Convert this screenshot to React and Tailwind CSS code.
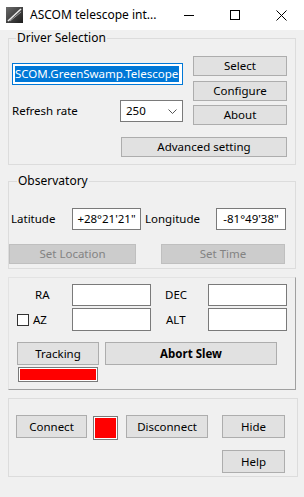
const Btn = ({ className = '', disabled, bold, children }) => (
  <div
    className={`flex items-center justify-center border ${
      disabled ? 'border-[#bfbfbf] bg-[#cccccc] text-[#838383]' : 'border-[#adadad] bg-[#e1e1e1] text-black'
    } ${bold ? 'font-bold' : ''} ${className}`}
  >
    {children}
  </div>
)

const Box = ({ className = '', children }) => (
  <div className={`flex items-center justify-center border border-[#7a7a7a] bg-white ${className}`}>
    {children}
  </div>
)

const App = () => {
  return (
    <div className="w-[304px] h-[497px] overflow-hidden bg-[#f0f0f0] text-[11.5px] leading-[16px] text-black font-['Noto_Sans',sans-serif]">
      {/* Title bar */}
      <div className="h-[30px] bg-white flex items-center text-[12px]">
        <svg className="ml-[6px]" width="17" height="16" viewBox="0 0 17 16">
          <defs>
            <linearGradient id="sky" x1="0" y1="0" x2="1" y2="1">
              <stop offset="0" stopColor="#6b6b6b" />
              <stop offset="1" stopColor="#1c1c1c" />
            </linearGradient>
          </defs>
          <rect width="17" height="16" fill="url(#sky)" />
          <path d="M2 14 L15 2" stroke="#e8e8e8" strokeWidth="1.6" />
          <path d="M4 14 L15 5" stroke="#9a9a9a" strokeWidth="1" />
        </svg>
        <span className="ml-[7px]">ASCOM telescope int...</span>
        <div className="flex-1" />
        <div className="w-[46px] h-full flex items-center justify-center">
          <svg width="10" height="10" viewBox="0 0 10 10">
            <path d="M0 5.5 H10" stroke="#000" strokeWidth="1" />
          </svg>
        </div>
        <div className="w-[46px] h-full flex items-center justify-center">
          <svg width="10" height="10" viewBox="0 0 10 10">
            <rect x="0.5" y="0.5" width="9" height="9" fill="none" stroke="#000" strokeWidth="1" />
          </svg>
        </div>
        <div className="w-[46px] h-full flex items-center justify-center">
          <svg width="11" height="11" viewBox="0 0 11 11">
            <path d="M0.5 0.5 L10.5 10.5 M10.5 0.5 L0.5 10.5" stroke="#000" strokeWidth="1" />
          </svg>
        </div>
      </div>

      <div className="px-[8px]">
        {/* Driver Selection */}
        <fieldset className="border border-[#dcdcdc] pb-[7px]">
          <legend className="ml-[7px] px-[1px] leading-[16px] text-[12px]">Driver Selection</legend>
          <div className="flex items-start">
            <div className="ml-[3px] w-[171px]">
              <div className="mt-[17px] h-[22px] border border-[#0078d7] bg-white flex items-center overflow-hidden pl-[2px]">
                <span className="bg-[#0078d7] text-white whitespace-nowrap pr-[1px]">SCOM.GreenSwamp.Telescope</span>
              </div>
              <div className="mt-[15px] h-[22px] flex items-center">
                <span>Refresh rate</span>
                <div className="ml-auto w-[63px] h-[22px] border border-[#7a7a7a] bg-white flex items-center pl-[5px] pr-[5px]">
                  <span>250</span>
                  <svg className="ml-auto" width="9" height="5" viewBox="0 0 9 5">
                    <path d="M0.5 0.5 L4.5 4.5 L8.5 0.5" fill="none" stroke="#555" strokeWidth="1" />
                  </svg>
                </div>
              </div>
            </div>
            <div className="ml-[10px] w-[94px] flex flex-col">
              <Btn className="mt-[10px] h-[20px]">Select</Btn>
              <Btn className="mt-[5px] h-[20px]">Configure</Btn>
              <Btn className="mt-[4px] h-[20px]">About</Btn>
            </div>
          </div>
          <Btn className="ml-[112px] mt-[12px] w-[166px] h-[20px]">Advanced setting</Btn>
        </fieldset>

        {/* Observatory */}
        <fieldset className="mt-[8px] border border-[#dcdcdc] pb-[4px]">
          <legend className="ml-[8px] px-[1px] leading-[16px] text-[12px]">Observatory</legend>
          <div className="mt-[19px] h-[22px] flex items-center">
            <span className="w-[63px] pl-[2px]">Latitude</span>
            <Box className="w-[69px] h-[22px]">+28°21'21"</Box>
            <span className="w-[75px] pl-[4px]">Longitude</span>
            <Box className="w-[70px] h-[22px]">-81°49'38"</Box>
          </div>
          <div className="mt-[14px] flex">
            <Btn disabled className="w-[127px] h-[20px]">Set Location</Btn>
            <Btn disabled className="ml-[25px] w-[124px] h-[20px]">Set Time</Btn>
          </div>
        </fieldset>

        {/* Mount position */}
        <div className="mt-[8px] h-[113px] border border-t-[#e3e3e3] border-l-[#e3e3e3] border-r-[#a0a0a0] border-b-[#a0a0a0]">
          <div className="mt-[6px] h-[22px] flex items-center">
            <span className="w-[63px] pl-[26px]">RA</span>
            <Box className="w-[79px] h-[22px]" />
            <span className="w-[57px] pl-[14px]">DEC</span>
            <Box className="w-[79px] h-[22px]" />
          </div>
          <div className="mt-[2px] h-[23px] flex items-center">
            <div className="w-[63px] flex items-center">
              <div className="ml-[8px] w-[12px] h-[12px] border border-[#333] bg-white" />
              <span className="ml-[4px]">AZ</span>
            </div>
            <Box className="w-[79px] h-[23px]" />
            <span className="w-[57px] pl-[15px]">ALT</span>
            <Box className="w-[79px] h-[23px]" />
          </div>
          <div className="mt-[11px] flex">
            <Btn className="ml-[8px] w-[82px] h-[23px]">Tracking</Btn>
            <Btn bold className="ml-[6px] w-[172px] h-[23px]">Abort Slew</Btn>
          </div>
          <div className="mt-[2px] ml-[9px] w-[80px] h-[15px] border border-[#7a7a7a] bg-white p-[1px]">
            <div className="h-full bg-[#ff0000]" />
          </div>
        </div>

        {/* Connection */}
        <div className="mt-[8px] w-[290px] h-[79px] border border-[#dcdcdc]">
          <div className="mt-[16px] flex items-start">
            <Btn className="ml-[7px] w-[71px] h-[23px]">Connect</Btn>
            <div className="ml-[6px] mt-[1px] w-[25px] h-[24px] border border-[#7a7a7a] bg-white p-[1px]">
              <div className="h-full bg-[#ff0000]" />
            </div>
            <Btn className="ml-[8px] w-[82px] h-[23px]">Disconnect</Btn>
            <Btn className="ml-[14px] w-[63px] h-[23px]">Hide</Btn>
          </div>
          <Btn className="mt-[10px] ml-[213px] w-[63px] h-[23px]">Help</Btn>
        </div>
      </div>
    </div>
  )
}

export default App
